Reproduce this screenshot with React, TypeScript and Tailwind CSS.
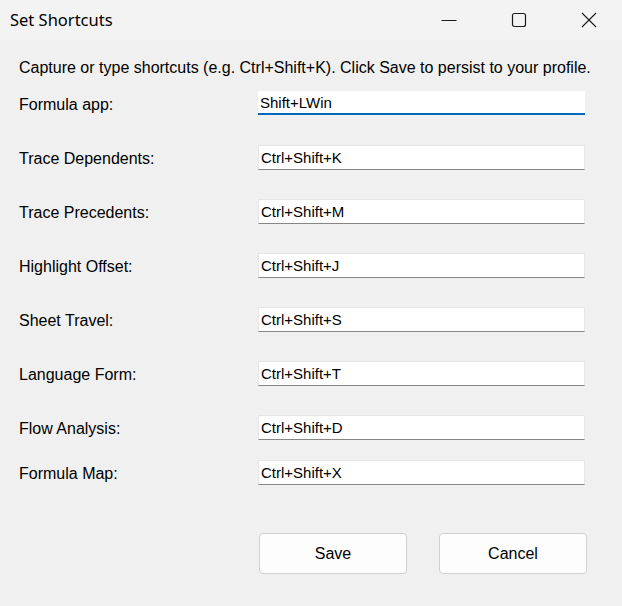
const rows: { label: string; value: string; focused?: boolean }[] = [
  { label: 'Formula app:', value: 'Shift+LWin', focused: true },
  { label: 'Trace Dependents:', value: 'Ctrl+Shift+K' },
  { label: 'Trace Precedents:', value: 'Ctrl+Shift+M' },
  { label: 'Highlight Offset:', value: 'Ctrl+Shift+J' },
  { label: 'Sheet Travel:', value: 'Ctrl+Shift+S' },
  { label: 'Language Form:', value: 'Ctrl+Shift+T' },
  { label: 'Flow Analysis:', value: 'Ctrl+Shift+D' },
  { label: 'Formula Map:', value: 'Ctrl+Shift+X' },
];

function ShortcutRow({ label, value, focused }: { label: string; value: string; focused?: boolean }) {
  return (
    <div className="flex items-center h-[24px]">
      <div className="w-[239px] pt-[3px] text-[16px] text-black">{label}</div>
      <div
        className={
          focused
            ? 'w-[327px] h-[24px] bg-white border-b-2 border-[#0067c0] flex items-center pl-[2px] pt-[3px] text-[15px] text-black'
            : 'w-[327px] h-[25px] bg-white border border-[#e6e6e6] border-b-[#868686] flex items-center pl-[2px] pt-[2px] text-[15px] text-black'
        }
      >
        {value}
      </div>
    </div>
  );
}

export default function App() {
  return (
    <div className="w-[622px] h-[606px] bg-[#f0f0f0] flex flex-col font-['Liberation_Sans',Arial,sans-serif]">
      {/* Title bar */}
      <div className="h-[40px] bg-[#f3f3f3] flex items-center">
        <div className="pl-[10px] flex-1 text-[16.5px] text-black font-['Noto_Sans',sans-serif]">Set Shortcuts</div>
        <div className="flex items-center h-full mr-[8px]">
          <div className="w-[46px] h-full flex items-center justify-center">
            <svg width="16" height="16" viewBox="0 0 16 16">
              <path d="M0.5 8.5h15" stroke="#1a1a1a" strokeWidth="1" />
            </svg>
          </div>
          <div className="w-[46px] ml-[24px] h-full flex items-center justify-center">
            <svg width="16" height="16" viewBox="0 0 16 16">
              <rect x="1.5" y="1.5" width="13" height="13" rx="2" fill="none" stroke="#1a1a1a" strokeWidth="1.2" />
            </svg>
          </div>
          <div className="w-[46px] ml-[24px] mr-[2px] h-full flex items-center justify-center">
            <svg width="16" height="16" viewBox="0 0 16 16">
              <path d="M1 1l14 14M15 1L1 15" stroke="#1a1a1a" strokeWidth="1.1" />
            </svg>
          </div>
        </div>
      </div>

      {/* Body */}
      <div className="flex flex-col pl-[19px]">
        <div className="mt-[16px] h-[20px] text-[16px] text-black">
          Capture or type shortcuts (e.g. Ctrl+Shift+K). Click Save to persist to your profile.
        </div>
        <div className="mt-[15px] flex flex-col gap-[30px]">
          {rows.slice(0, 7).map((r) => (
            <ShortcutRow key={r.label} {...r} />
          ))}
        </div>
        <div className="mt-[21px]">
          <ShortcutRow {...rows[7]} />
        </div>
        <div className="mt-[49px] flex gap-[32px] pl-[240px]">
          <button className="w-[148px] h-[41px] bg-[#fdfdfd] border border-[#d0d0d0] rounded-[4px] text-[16px] text-black">
            Save
          </button>
          <button className="w-[148px] h-[41px] bg-[#fdfdfd] border border-[#d0d0d0] rounded-[4px] text-[16px] text-black">
            Cancel
          </button>
        </div>
      </div>
    </div>
  );
}
